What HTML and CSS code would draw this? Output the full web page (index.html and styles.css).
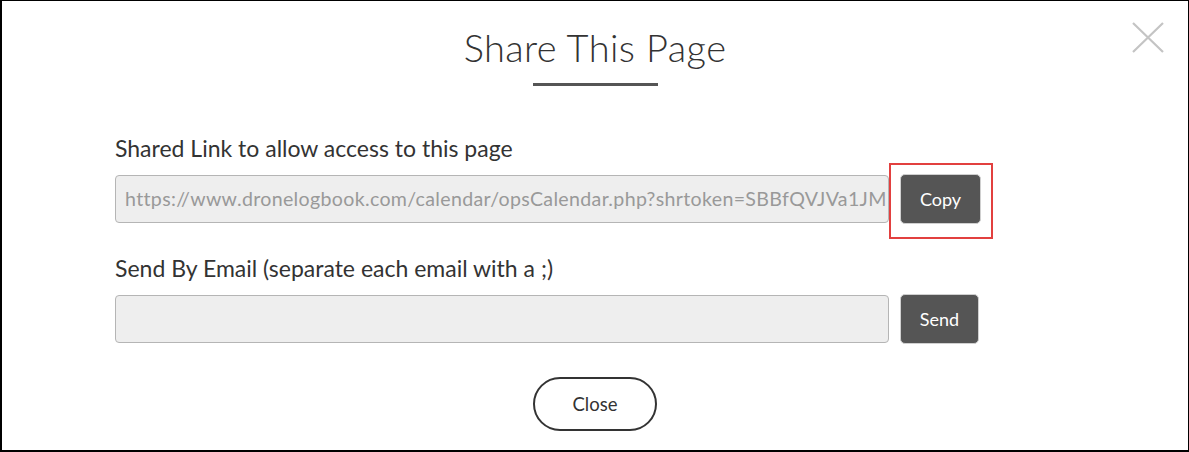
FILE: index.html
```html
<!DOCTYPE html>
<html>
<head>
<meta charset="utf-8">
<link rel="stylesheet" href="styles.css">
</head>
<body>
<div class="frame">
  <button class="close-x" aria-label="Close">
    <svg width="32" height="31" viewBox="0 0 32 31"><path d="M1 1 L31 30 M31 1 L1 30" stroke="#c4c4c4" stroke-width="2.2" fill="none"/></svg>
  </button>
  <div class="header">
    <h1 class="title">Share This Page</h1>
    <div class="rule"></div>
  </div>
  <div class="form">
    <label class="label">Shared Link to allow access to this page</label>
    <div class="row">
      <div class="input link">https://www.dronelogbook.com/calendar/opsCalendar.php?shrtoken=SBBfQVJVa1JM</div>
      <div class="btn-wrap">
        <button class="btn copy">Copy</button>
        <div class="highlight"></div>
      </div>
    </div>
    <label class="label label2">Send By Email (separate each email with a ;)</label>
    <div class="row">
      <div class="input"></div>
      <button class="btn send">Send</button>
    </div>
  </div>
  <div class="footer">
    <button class="close-btn">Close</button>
  </div>
</div>
</body>
</html>
```

FILE: styles.css
```css
html, body {
  margin: 0;
  padding: 0;
  background: #fff;
}
.frame {
  position: relative;
  box-sizing: border-box;
  width: 1189px;
  height: 452px;
  border-style: solid;
  border-color: #000;
  border-width: 1px 1px 2px 2px;
  font-family: "Lato", "Liberation Sans", sans-serif;
  color: #333;
  display: flex;
  flex-direction: column;
}
.close-x {
  position: absolute;
  top: 21px;
  right: 24px;
  padding: 0;
  border: 0;
  background: none;
  line-height: 0;
}
.header {
  display: flex;
  flex-direction: column;
  align-items: center;
  padding-top: 22px;
}
.title {
  margin: 0;
  font-size: 38px;
  font-weight: 300;
  line-height: 48px;
  color: #333;
  letter-spacing: 0.4px;
}
.rule {
  width: 125px;
  height: 3px;
  background: #555;
  margin-top: 12px;
}
.form {
  padding-left: 113px;
  margin-top: 47px;
  display: flex;
  flex-direction: column;
}
.label {
  font-size: 23px;
  line-height: 30px;
  color: #333;
}
.label2 {
  margin-top: 29px;
}
.row {
  display: flex;
  align-items: center;
  gap: 11px;
  margin-top: 11px;
}
.input {
  box-sizing: border-box;
  width: 774px;
  height: 48px;
  background: #eee;
  border: 1px solid #b5b5b5;
  border-radius: 4px;
  padding: 0 0 0 9px;
  font-size: 19.6px;
  letter-spacing: 0.33px;
  line-height: 46px;
  color: #999;
  white-space: nowrap;
  overflow: hidden;
}
.btn-wrap {
  position: relative;
  display: flex;
}
.btn {
  box-sizing: border-box;
  height: 50px;
  background: #555;
  color: #fff;
  border: 1px solid #d0d0d0;
  border-radius: 5px;
  font-family: inherit;
  font-size: 18px;
  padding: 0;
}
.copy { width: 81px; }
.send { width: 79px; }
.highlight {
  position: absolute;
  left: -11px;
  top: -11px;
  right: -12px;
  bottom: -15px;
  border: 2px solid #e2403f;
}
.footer {
  display: flex;
  justify-content: center;
  margin-top: 33px;
}
.close-btn {
  box-sizing: border-box;
  width: 124px;
  height: 54px;
  border: 2px solid #333;
  border-radius: 27px;
  background: #fff;
  font-family: inherit;
  font-size: 18.5px;
  color: #333;
}
```
